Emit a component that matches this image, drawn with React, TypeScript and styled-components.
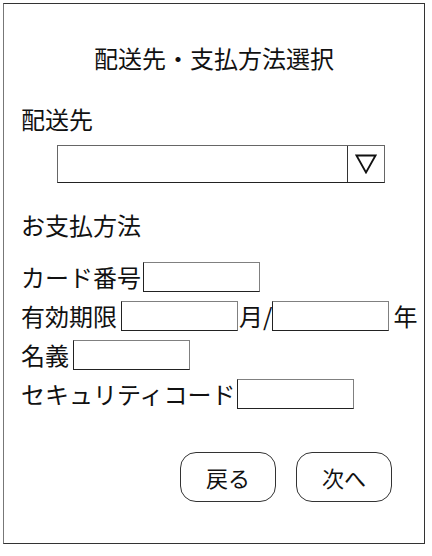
import React from "react";
import styled, { createGlobalStyle } from "styled-components";

const GlobalStyle = createGlobalStyle`
  html, body {
    margin: 0;
    padding: 0;
    background: #ffffff;
  }
  body {
    font-family: "Noto Sans CJK JP", "Noto Sans", sans-serif;
    color: #111111;
  }
`;

const Frame = styled.div`
  box-sizing: border-box;
  width: 422px;
  height: 541px;
  margin: 3px 0 0 3px;
  border: 1px solid #333333;
  border-left-color: #777777;
  display: flex;
  flex-direction: column;
`;

const Title = styled.h1`
  margin: 39px 0 0;
  font-size: 24px;
  font-weight: 400;
  line-height: 30px;
  text-align: center;
`;

const SectionLabel = styled.div<{ top: number }>`
  margin: ${(p) => p.top}px 0 0 17px;
  font-size: 24px;
  line-height: 30px;
`;

const Select = styled.div`
  box-sizing: border-box;
  display: flex;
  width: 328px;
  height: 38px;
  margin: 11px 0 0 53px;
  border: 1px solid #666666;
  border-bottom-color: #222222;
`;

const SelectValue = styled.div`
  flex: 1;
`;

const SelectArrow = styled.div`
  width: 36px;
  display: flex;
  align-items: center;
  justify-content: center;
  border-left: 1px solid #333333;
`;

const Form = styled.div`
  display: flex;
  flex-direction: column;
  margin: 17px 0 0 17px;
`;

const Row = styled.div`
  display: flex;
  align-items: center;
  height: 39px;
  font-size: 24px;
`;

const Label = styled.span<{ gap: number }>`
  margin-right: ${(p) => p.gap}px;
`;

const TextBox = styled.input`
  box-sizing: border-box;
  width: 117px;
  height: 30px;
  margin: 0;
  padding: 0 4px;
  border: 1px solid #222222;
  border-top-color: #808080;
  border-right-color: #808080;
  background: #ffffff;
  font-size: 16px;
  font-family: inherit;
`;

const Unit = styled.span<{ left: number }>`
  margin-left: ${(p) => p.left}px;
`;

const Actions = styled.div`
  display: flex;
  justify-content: flex-end;
  gap: 20px;
  margin-top: 39px;
  padding-right: 32px;
`;

const Button = styled.button`
  box-sizing: border-box;
  width: 96px;
  height: 50px;
  border: 1px solid #333333;
  border-radius: 16px;
  background: #ffffff;
  font-family: inherit;
  font-size: 22px;
  color: #111111;
  padding: 0;
`;

export default function App() {
  return (
    <>
      <GlobalStyle />
      <Frame>
        <Title>配送先・支払方法選択</Title>
        <SectionLabel top={31}>配送先</SectionLabel>
        <Select>
          <SelectValue />
          <SelectArrow>
            <svg width="22" height="20" viewBox="0 0 22 20">
              <polygon
                points="1.5,1.5 20.5,1.5 11,18.5"
                fill="none"
                stroke="#111"
                strokeWidth="1.8"
              />
            </svg>
          </SelectArrow>
        </Select>
        <SectionLabel top={27}>お支払方法</SectionLabel>
        <Form>
          <Row>
            <Label gap={2}>カード番号</Label>
            <TextBox />
          </Row>
          <Row>
            <Label gap={4}>有効期限</Label>
            <TextBox />
            <Unit left={1}>月/</Unit>
            <TextBox />
            <Unit left={4}>年</Unit>
          </Row>
          <Row>
            <Label gap={4}>名義</Label>
            <TextBox />
          </Row>
          <Row>
            <Label gap={1}>セキュリティコード</Label>
            <TextBox />
          </Row>
        </Form>
        <Actions>
          <Button>戻る</Button>
          <Button>次へ</Button>
        </Actions>
      </Frame>
    </>
  );
}
